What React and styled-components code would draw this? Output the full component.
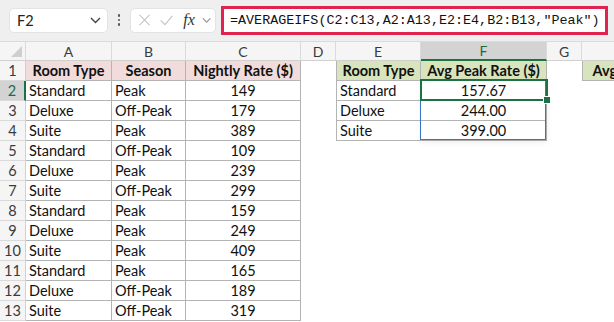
import React from "react";
import styled, { createGlobalStyle } from "styled-components";

const GlobalStyle = createGlobalStyle`
  html, body {
    margin: 0;
    padding: 0;
    background: #ffffff;
    overflow: hidden;
  }
  body {
    font-family: "Lato", "Liberation Sans", sans-serif;
  }
`;

const COLS = ["A", "B", "C", "D", "E", "F", "G", "H"];
const WIDTHS = "26px 86px 74px 115px 35px 85px 126px 35px 140px";

const rooms = [
  ["Standard", "Peak", 149],
  ["Deluxe", "Off-Peak", 179],
  ["Suite", "Peak", 389],
  ["Standard", "Off-Peak", 109],
  ["Deluxe", "Peak", 239],
  ["Suite", "Off-Peak", 299],
  ["Standard", "Peak", 159],
  ["Deluxe", "Peak", 249],
  ["Suite", "Peak", 409],
  ["Standard", "Peak", 165],
  ["Deluxe", "Off-Peak", 189],
  ["Suite", "Off-Peak", 319],
];

const summary = [
  ["Standard", "157.67"],
  ["Deluxe", "244.00"],
  ["Suite", "399.00"],
];

const Page = styled.div`
  width: 614px;
  height: 322px;
  overflow: hidden;
  background: #ffffff;
`;

const FormulaBar = styled.div`
  height: 41px;
  box-sizing: border-box;
  background: #efefef;
  display: flex;
  align-items: center;
  padding: 0 6px 1px 9px;
`;

const NameBox = styled.div`
  width: 99px;
  height: 25px;
  box-sizing: border-box;
  background: #fff;
  border: 1px solid #e3e3e3;
  border-radius: 5px;
  display: flex;
  align-items: center;
  justify-content: space-between;
  padding: 0 6px 0 7px;
  font-size: 14.5px;
  color: #222;
`;

const Dots = styled.div`
  width: 22px;
  display: flex;
  flex-direction: column;
  align-items: center;
  gap: 2px;
  span {
    width: 2.5px;
    height: 2.5px;
    background: #555;
    border-radius: 50%;
  }
`;

const FxBox = styled.div`
  width: 86px;
  height: 25px;
  box-sizing: border-box;
  background: #fff;
  border: 1px solid #e3e3e3;
  border-radius: 5px;
  display: flex;
  align-items: center;
  gap: 7px;
  padding: 0 4px 0 6px;
`;

const Fx = styled.span`
  font-family: "Liberation Serif", serif;
  font-style: italic;
  font-size: 16px;
  color: #333;
  margin-left: 2px;
`;

const FormulaInput = styled.div`
  flex: 1;
  margin-left: 5px;
  height: 29px;
  box-sizing: border-box;
  border: 3px solid #e0234f;
  background: #fff;
  display: flex;
  align-items: center;
  padding-left: 6px;
  font-family: "Liberation Mono", monospace;
  font-size: 13.4px;
  color: #111;
  white-space: nowrap;
  overflow: hidden;
`;

const Grid = styled.div`
  display: grid;
  grid-template-columns: ${WIDTHS};
  grid-auto-rows: 20px;
  width: max-content;
`;

const ColHead = styled.div`
  box-sizing: border-box;
  background: ${(p) => (p.$active ? "#d3d3d3" : "#f5f5f5")};
  color: ${(p) => (p.$active ? "#1e6b3e" : "#3a3a3a")};
  border-top: 1px solid #dadada;
  border-right: 1px solid #dadada;
  border-bottom: ${(p) => (p.$active ? "2px solid #1e7145" : "1px solid #d0d0d0")};
  display: flex;
  align-items: center;
  justify-content: center;
  font-size: 14px;
`;

const Corner = styled(ColHead)`
  position: relative;
  &::after {
    content: "";
    position: absolute;
    right: 3px;
    bottom: 3px;
    border-style: solid;
    border-width: 0 0 11px 11px;
    border-color: transparent transparent #cfcfcf transparent;
  }
`;

const RowHead = styled.div`
  box-sizing: border-box;
  background: ${(p) => (p.$active ? "#d3d3d3" : "#f5f5f5")};
  color: ${(p) => (p.$active ? "#1e6b3e" : "#3a3a3a")};
  border-right: ${(p) => (p.$active ? "2px solid #1e7145" : "1px solid #d0d0d0")};
  border-bottom: 1px solid #dadada;
  display: flex;
  align-items: center;
  justify-content: center;
  font-size: 14.5px;
`;

const fills = { pink: "#f2dcdb", green: "#d8e4bc", none: "#ffffff" };

const Cell = styled.div`
  position: relative;
  box-sizing: border-box;
  background: ${(p) => fills[p.$fill || "none"]};
  border-right: ${(p) => (p.$bordered ? "1px solid #b4b4b4" : "none")};
  border-bottom: ${(p) => (p.$bordered ? "1px solid #b4b4b4" : "none")};
  border-left: ${(p) => (p.$leftEdge ? "1px solid #b4b4b4" : "none")};
  display: flex;
  align-items: center;
  justify-content: ${(p) => (p.$center ? "center" : "flex-start")};
  padding: 0 3px;
  font-size: 14.5px;
  font-weight: ${(p) => (p.$bold ? 700 : 400)};
  color: #111;
  white-space: nowrap;
  overflow: ${(p) => (p.$clip ? "hidden" : "visible")};
`;

/* blue reference range F2:F4, drawn over the three cells */
const RefRange = styled.div`
  position: absolute;
  left: -1px;
  top: -1px;
  width: calc(100% + 1px);
  height: 60px;
  box-sizing: border-box;
  border: 1px solid #3a72c6;
  box-shadow: 1px 2px 6px rgba(0, 0, 0, 0.08);
  pointer-events: none;
  z-index: 1;
`;

const Selected = styled.div`
  position: absolute;
  left: -1px;
  top: -2px;
  right: -2px;
  bottom: -1px;
  border: 2px solid #1e7145;
  pointer-events: none;
  z-index: 2;
  &::after {
    content: "";
    position: absolute;
    right: -5px;
    bottom: -5px;
    width: 6px;
    height: 6px;
    background: #1e7145;
    border: 1px solid #fff;
  }
`;

const Close = () => (
  <svg width="18" height="18" viewBox="0 0 18 18">
    <path d="M3 3 L15 15 M15 3 L3 15" stroke="#c4c4c4" strokeWidth="1.3" fill="none" />
  </svg>
);

const Check = () => (
  <svg width="18" height="18" viewBox="0 0 18 18">
    <path d="M2 9.5 L7 14.5 L16 4" stroke="#c4c4c4" strokeWidth="1.3" fill="none" />
  </svg>
);

const Chevron = ({ color = "#444" }) => (
  <svg width="11" height="7" viewBox="0 0 11 7">
    <path d="M1 1 L5.5 5.5 L10 1" stroke={color} strokeWidth="1.4" fill="none" />
  </svg>
);

const rowCells = (r) => {
  // r is the sheet row number (1..13)
  const out = [];
  if (r === 1) {
    out.push(<Cell key="a" $fill="pink" $bordered $bold $center>Room Type</Cell>);
    out.push(<Cell key="b" $fill="pink" $bordered $bold $center>Season</Cell>);
    out.push(<Cell key="c" $fill="pink" $bordered $bold $center>Nightly Rate ($)</Cell>);
  } else {
    const [type, season, rate] = rooms[r - 2];
    out.push(<Cell key="a" $bordered>{type}</Cell>);
    out.push(<Cell key="b" $bordered>{season}</Cell>);
    out.push(<Cell key="c" $bordered $center>{rate}</Cell>);
  }
  out.push(<Cell key="d" />);
  if (r === 1) {
    out.push(<Cell key="e" $fill="green" $bordered $leftEdge $bold $center>Room Type</Cell>);
    out.push(<Cell key="f" $fill="green" $bordered $bold $center>Avg Peak Rate ($)</Cell>);
  } else if (r <= 4) {
    const [type, avg] = summary[r - 2];
    out.push(<Cell key="e" $bordered $leftEdge>{type}</Cell>);
    out.push(
      <Cell key="f" $bordered $center>
        {avg}
        {r === 2 && <RefRange />}
        {r === 2 && <Selected />}
      </Cell>
    );
  } else {
    out.push(<Cell key="e" />);
    out.push(<Cell key="f" />);
  }
  out.push(<Cell key="g" />);
  if (r === 1) {
    out.push(
      <Cell key="h" $fill="green" $bordered $leftEdge $bold $clip>
        &nbsp;&nbsp;Avg Off-Peak Rate ($)
      </Cell>
    );
  } else {
    out.push(<Cell key="h" />);
  }
  return out;
};

export default function App() {
  const rows = Array.from({ length: 13 }, (_, i) => i + 1);
  return (
    <Page>
      <GlobalStyle />
      <FormulaBar>
        <NameBox>
          <span>F2</span>
          <Chevron />
        </NameBox>
        <Dots>
          <span />
          <span />
          <span />
        </Dots>
        <FxBox>
          <Close />
          <Check />
          <Fx>fx</Fx>
          <Chevron color="#999" />
        </FxBox>
        <FormulaInput>=AVERAGEIFS(C2:C13,A2:A13,E2:E4,B2:B13,"Peak")</FormulaInput>
      </FormulaBar>
      <Grid>
        <Corner />
        {COLS.map((c) => (
          <ColHead key={c} $active={c === "F"}>
            {c}
          </ColHead>
        ))}
        {rows.map((r) => (
          <React.Fragment key={r}>
            <RowHead $active={r === 2}>{r}</RowHead>
            {rowCells(r)}
          </React.Fragment>
        ))}
      </Grid>
    </Page>
  );
}
